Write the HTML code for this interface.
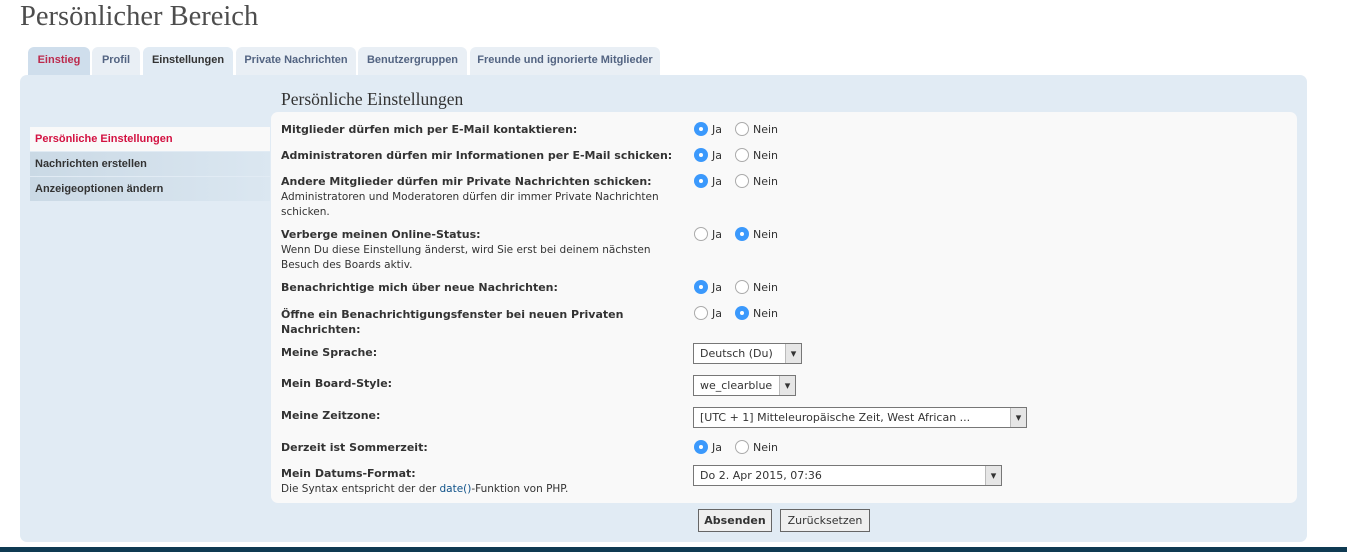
<!DOCTYPE html><html><head><meta charset="utf-8"><style>
*{margin:0;padding:0;box-sizing:border-box}
body{width:1347px;height:552px;background:#fff;position:relative;overflow:hidden;font-family:"DejaVu Sans",Verdana,sans-serif;font-size:11px;color:#333}
.a{position:absolute;white-space:nowrap}
h1{position:absolute;left:20px;top:1px;font:28.5px "Liberation Serif",serif;color:#4d4d4d;white-space:nowrap}
.tab{position:absolute;top:47px;height:28px;border-radius:6px 6px 0 0;background:#e9eff5;font:bold 11px "Liberation Sans",sans-serif;color:#536482;text-align:center;line-height:27px}
.box{position:absolute;left:20px;top:75px;width:1287px;height:467px;background:#e1ebf4;border-radius:7px}
.side{position:absolute;left:30px;width:240px;height:24px;font:bold 11px "Liberation Sans",sans-serif;color:#333;padding-left:5px;line-height:25px;background:linear-gradient(90deg,#cad9e5,#dbe7f1)}
.panel{position:absolute;left:271px;top:112px;width:1026px;height:391px;background:#f9f9f9;border-radius:7px}
.l{position:absolute;left:281px;font-weight:bold;color:#333;white-space:nowrap}
.d{position:absolute;left:281px;color:#333;line-height:15px;font-size:10.5px;white-space:nowrap}
.r{position:absolute;width:14px;height:14px;border-radius:50%;border:1px solid #aaa;background:#fff}
.r.on{border:none;background:#3b99fc}
.r.on::after{content:"";position:absolute;left:5px;top:5px;width:4px;height:4px;border-radius:50%;background:#fff}
.sel{position:absolute;left:693px;height:21px;border:1px solid #777;background:#fff;padding-left:6px;line-height:20px}
.sel::after{content:"▾";position:absolute;right:0;top:0;width:15px;height:19px;background:#e6e6e6;border-left:1px solid #bbb;text-align:center;font-size:11px;line-height:19px}
.btn{position:absolute;top:509px;height:23px;border:1px solid #666;background:#efefef;line-height:22px;text-align:center}
</style></head><body>
<h1>Persönlicher Bereich</h1>
<div class="box"></div>
<div class="tab" style="left:28px;width:62px;background:#cfdeec;color:#bc2a4d">Einstieg</div>
<div class="tab" style="left:92px;width:48px">Profil</div>
<div class="tab" style="left:143px;width:90px;background:#e1ebf4;color:#333">Einstellungen</div>
<div class="tab" style="left:236px;width:120px">Private Nachrichten</div>
<div class="tab" style="left:358px;width:109px">Benutzergruppen</div>
<div class="tab" style="left:470px;width:190px">Freunde und ignorierte Mitglieder</div>
<div class="a" style="left:281px;top:89px;font:17.5px 'Liberation Serif',serif;color:#333">Persönliche Einstellungen</div>
<div class="side" style="top:127px;background:#f9f9f9;color:#d31141">Persönliche Einstellungen</div>
<div class="side" style="top:152px">Nachrichten erstellen</div>
<div class="side" style="top:177px">Anzeigeoptionen ändern</div>
<div class="panel"></div>
<div class="l" style="top:123px">Mitglieder dürfen mich per E-Mail kontaktieren:</div>
<div class="l" style="top:149px">Administratoren dürfen mir Informationen per E-Mail schicken:</div>
<div class="l" style="top:175px">Andere Mitglieder dürfen mir Private Nachrichten schicken:</div>
<div class="d" style="top:190px">Administratoren und Moderatoren dürfen dir immer Private Nachrichten<br>schicken.</div>
<div class="l" style="top:228px">Verberge meinen Online-Status:</div>
<div class="d" style="top:243px">Wenn Du diese Einstellung änderst, wird Sie erst bei deinem nächsten<br>Besuch des Boards aktiv.</div>
<div class="l" style="top:281px">Benachrichtige mich über neue Nachrichten:</div>
<div class="l" style="top:307px;line-height:15px">Öffne ein Benachrichtigungsfenster bei neuen Privaten<br>Nachrichten:</div>
<div class="l" style="top:346px">Meine Sprache:</div>
<div class="l" style="top:377px">Mein Board-Style:</div>
<div class="l" style="top:409px">Meine Zeitzone:</div>
<div class="l" style="top:441px">Derzeit ist Sommerzeit:</div>
<div class="l" style="top:467px">Mein Datums-Format:</div>
<div class="d" style="top:482px">Die Syntax entspricht der der <span style="color:#105289">date()</span>-Funktion von PHP.</div>
<div class="r on" style="left:694px;top:122px"></div><div class="a" style="left:712px;top:123px">Ja</div><div class="r" style="left:735px;top:122px"></div><div class="a" style="left:753px;top:123px">Nein</div>
<div class="r on" style="left:694px;top:148px"></div><div class="a" style="left:712px;top:149px">Ja</div><div class="r" style="left:735px;top:148px"></div><div class="a" style="left:753px;top:149px">Nein</div>
<div class="r on" style="left:694px;top:174px"></div><div class="a" style="left:712px;top:175px">Ja</div><div class="r" style="left:735px;top:174px"></div><div class="a" style="left:753px;top:175px">Nein</div>
<div class="r" style="left:694px;top:227px"></div><div class="a" style="left:712px;top:228px">Ja</div><div class="r on" style="left:735px;top:227px"></div><div class="a" style="left:753px;top:228px">Nein</div>
<div class="r on" style="left:694px;top:280px"></div><div class="a" style="left:712px;top:281px">Ja</div><div class="r" style="left:735px;top:280px"></div><div class="a" style="left:753px;top:281px">Nein</div>
<div class="r" style="left:694px;top:306px"></div><div class="a" style="left:712px;top:307px">Ja</div><div class="r on" style="left:735px;top:306px"></div><div class="a" style="left:753px;top:307px">Nein</div>
<div class="r on" style="left:694px;top:440px"></div><div class="a" style="left:712px;top:441px">Ja</div><div class="r" style="left:735px;top:440px"></div><div class="a" style="left:753px;top:441px">Nein</div>
<div class="sel" style="top:343px;width:109px">Deutsch (Du)</div>
<div class="sel" style="top:375px;width:103px">we_clearblue</div>
<div class="sel" style="top:407px;width:334px">[UTC + 1] Mitteleuropäische Zeit, West African ...</div>
<div class="sel" style="top:465px;width:309px">Do 2. Apr 2015, 07:36</div>
<div class="btn" style="left:698px;width:74px;font-weight:bold">Absenden</div>
<div class="btn" style="left:780px;width:90px">Zurücksetzen</div>
<div class="a" style="left:0;top:547px;width:1347px;height:5px;background:#0f3a52"></div>
</body></html>
